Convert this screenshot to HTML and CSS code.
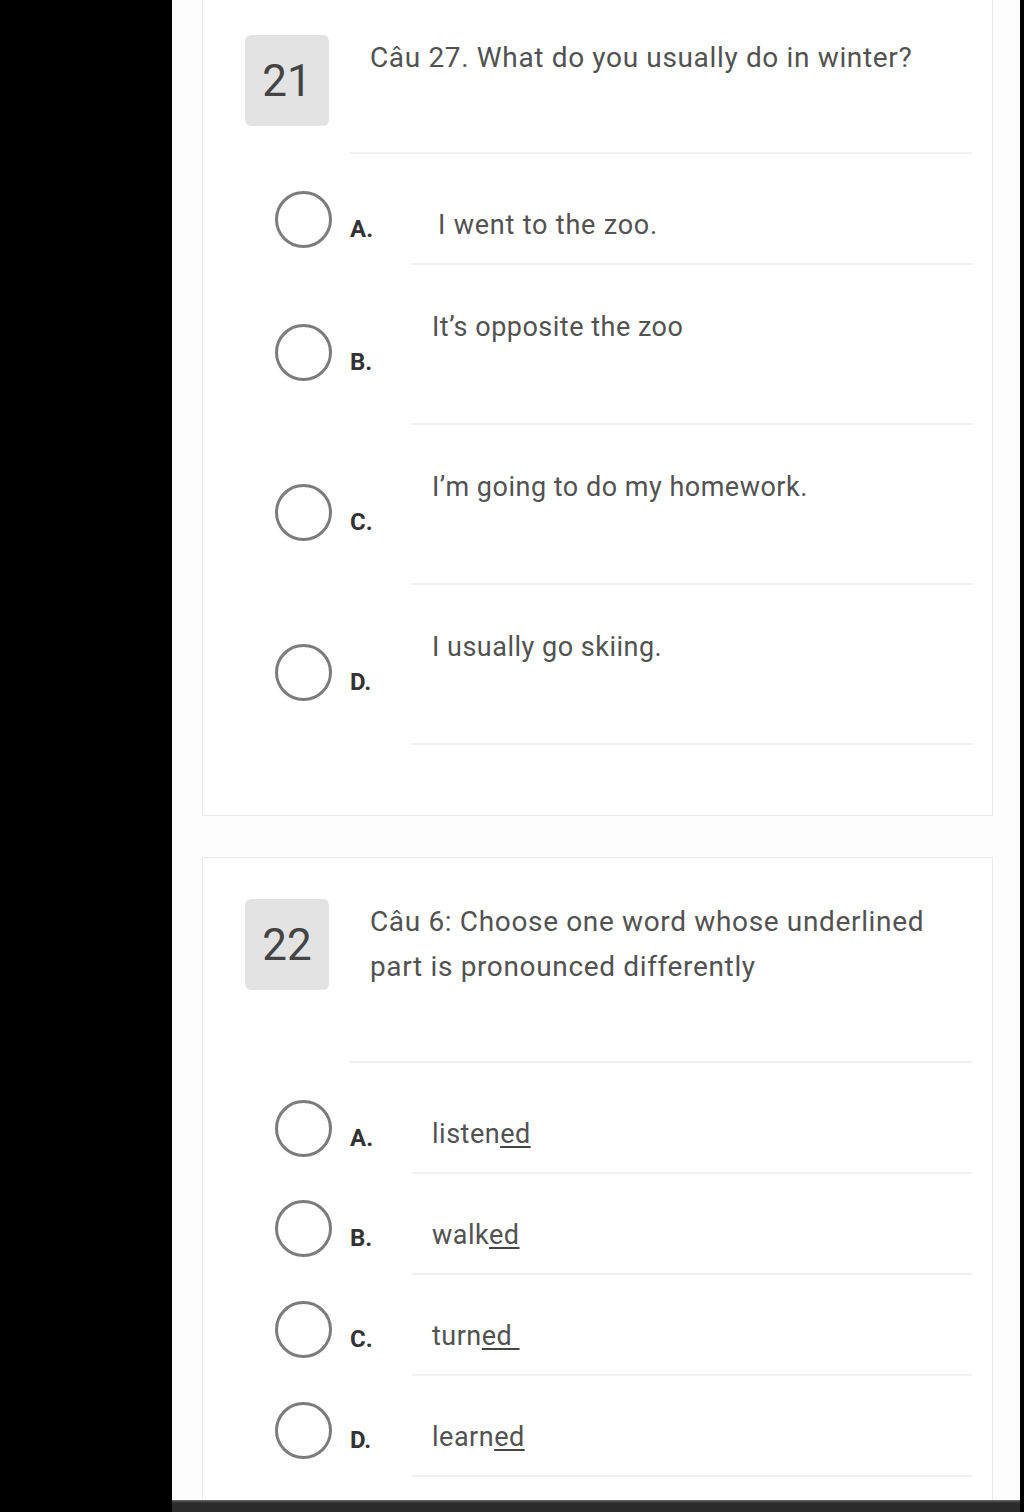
FILE: index.html
```html
<!DOCTYPE html>
<html lang="vi">
<head>
<meta charset="utf-8">
<title>Quiz</title>
<link rel="stylesheet" href="styles.css">
</head>
<body>
<div class="frame">
  <div class="band"></div>
  <div class="screen">
    <div class="content">
      <section class="card card--first">
        <div class="head">
          <div class="badge">21</div>
          <div class="question"><p>Câu 27. What do you usually do in winter?</p></div>
        </div>
        <div class="option option--first">
          <div class="choice"><span class="radio"></span><span class="label">A.</span></div>
          <div class="answer answer--indent">I went to the zoo.</div>
        </div>
        <div class="option">
          <div class="choice choice--tall"><span class="radio"></span><span class="label">B.</span></div>
          <div class="answer answer--tall">It’s opposite the zoo</div>
        </div>
        <div class="option">
          <div class="choice choice--tall"><span class="radio"></span><span class="label">C.</span></div>
          <div class="answer answer--tall">I’m going to do my homework.</div>
        </div>
        <div class="option">
          <div class="choice choice--tall"><span class="radio"></span><span class="label">D.</span></div>
          <div class="answer answer--tall">I usually go skiing.</div>
        </div>
      </section>
      <section class="card">
        <div class="head">
          <div class="badge">22</div>
          <div class="question"><p>Câu 6: Choose one word whose underlined part is pronounced differently</p></div>
        </div>
        <div class="option option--first">
          <div class="choice"><span class="radio"></span><span class="label">A.</span></div>
          <div class="answer">listen<u>ed</u></div>
        </div>
        <div class="option">
          <div class="choice"><span class="radio"></span><span class="label">B.</span></div>
          <div class="answer">walk<u>ed</u></div>
        </div>
        <div class="option">
          <div class="choice"><span class="radio"></span><span class="label">C.</span></div>
          <div class="answer">turn<u>ed&nbsp;</u></div>
        </div>
        <div class="option">
          <div class="choice"><span class="radio"></span><span class="label">D.</span></div>
          <div class="answer">learn<u>ed</u></div>
        </div>
      </section>
    </div>
    <div class="navbar"></div>
  </div>
  <div class="band band--right"></div>
</div>
</body>
</html>
```
FILE: styles.css
```css
html, body {
  margin: 0;
  padding: 0;
  background: #000;
}
body {
  font-family: Roboto, "Liberation Sans", sans-serif;
  color: #555;
}
.frame {
  display: flex;
  height: 1512px;
  overflow: hidden;
}
.band {
  width: 172px;
  flex: none;
  background: #000;
}
.band--right {
  width: auto;
  flex: 1;
}
.screen {
  width: 848px;
  flex: none;
  display: flex;
  flex-direction: column;
  background: #fdfdfd;
}
.content {
  flex: 1;
  overflow: hidden;
  padding: 0 27px 0 30px;
}
.navbar {
  height: 12px;
  flex: none;
  background: linear-gradient(#6a6a6a, #2b2b2b 3px, #2b2b2b);
}
.card {
  background: #fff;
  border: 1px solid #ebebeb;
  padding: 41px 20px 70px 42px;
  margin-bottom: 41px;
}
.card--first {
  margin-top: -7px;
}
.head {
  display: flex;
  align-items: flex-start;
}
.badge {
  width: 84px;
  height: 91px;
  flex: none;
  background: #e3e3e3;
  border-radius: 6px;
  display: flex;
  align-items: center;
  justify-content: center;
  font-size: 44px;
  color: #444;
}
.question {
  flex: 1;
  margin-left: 21px;
  padding: 0 0 72px 20px;
  border-bottom: 2px solid #f1f1f1;
}
.question p {
  margin: 0;
  padding-right: 20px;
  font-size: 28px;
  line-height: 45px;
  letter-spacing: 0.65px;
  color: #525252;
}
.option {
  display: flex;
  padding-left: 30px;
}
.choice {
  width: 137px;
  flex: none;
  display: flex;
  align-items: flex-end;
  align-self: flex-start;
  padding-top: 26px;
}
.option--first .choice {
  padding-top: 37px;
}
.option .choice--tall {
  padding-top: 59px;
}
.radio {
  width: 57px;
  height: 57px;
  flex: none;
  box-sizing: border-box;
  border: 3px solid #7c7c7c;
  border-radius: 50%;
}
.label {
  margin-left: 18px;
  font-size: 24px;
  font-weight: 700;
  line-height: 38px;
  color: #333;
}
.answer {
  flex: 1;
  font-size: 27px;
  line-height: 36px;
  letter-spacing: 0.5px;
  color: #525252;
  padding: 43px 0 20px 20px;
  border-bottom: 2px solid #f1f1f1;
}
.option--first .answer {
  padding-top: 53px;
  padding-bottom: 20px;
}
.answer--indent {
  padding-left: 26px;
  letter-spacing: 0.8px;
}
.option .answer--tall {
  padding-top: 44px;
  padding-bottom: 78px;
}
.answer u {
  text-decoration-thickness: 2px;
  text-underline-offset: 3px;
  text-decoration-color: #444;
}
```
